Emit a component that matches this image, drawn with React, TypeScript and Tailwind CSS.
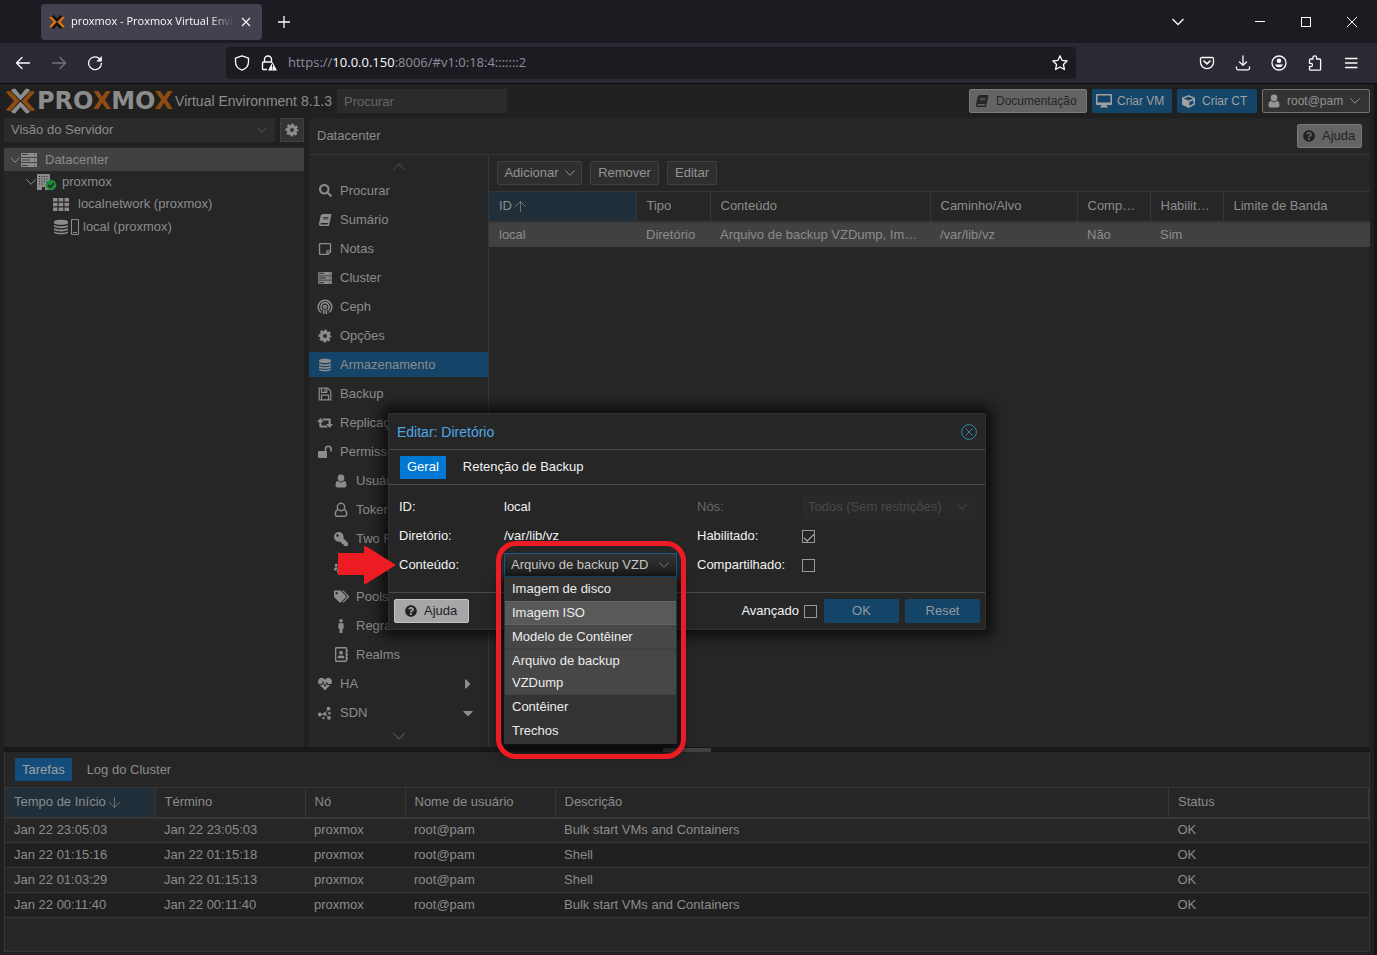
import { useState } from 'react';
import type { ReactNode } from 'react';
import { ArrowDown, ArrowUp } from 'lucide-react';
import {
    FaBook,
    FaCaretDown,
    FaCaretRight,
    FaCube,
    FaHeartbeat,
    FaKey,
    FaMale,
    FaQuestionCircle,
    FaRegAddressBook,
    FaRegStickyNote,
    FaSearch,
    FaTags,
    FaUsers
} from 'react-icons/fa';

type IconProps = { className?: string };

const Chevron = ({ className = '' }: IconProps) => (
    <svg viewBox="0 0 10 6" className={`shrink-0 ${className}`} fill="none" stroke="currentColor" strokeWidth="1" aria-hidden="true">
        <path d="M.5 .5L5 5.300 9.500 .5" />
    </svg>
);

const ServerIcon = ({ className = '' }: IconProps) => (
    <svg viewBox="0 0 16 14" className={className} fill="currentColor" aria-hidden="true">
        <path fillRule="evenodd" d="M0 0h16v4H0zM1 1h6v1H1zM13 1h1v1h-1zM0 5h16v4H0zM1 6.500h8v1H1zM13 6.500h1v1h-1zM0 10h16v4H0zM1 12h6v1H1zM13 12h1v1h-1z" />
    </svg>
);

const CogIcon = () => (
    <svg viewBox="0 0 14 14" className="size-3.5" fill="none" stroke="currentColor" aria-hidden="true">
        <circle cx="7" cy="7" r="3.600" strokeWidth="3.200" />
        <circle cx="7" cy="7" r="5.600" strokeWidth="1.800" strokeDasharray="2.600 1.798" strokeDashoffset="1.300" />
    </svg>
);

const DatabaseIcon = ({ className = '' }: IconProps) => (
    <svg viewBox="0 0 15 16" className={className} fill="currentColor" aria-hidden="true">
        <path d="M0 2.500c0-3 15-3 15 0v1.200c0 2.600-15 2.600-15 0zM0 5.800c3 1.900 12 1.900 15 0v1.500c0 2.600-15 2.600-15 0zM0 9.300c3 1.900 12 1.900 15 0v1.500c0 2.600-15 2.600-15 0zM0 12.700c3 1.900 12 1.900 15 0v.8c0 3-15 3-15 0z" />
    </svg>
);

const UserIcon = ({ className = '' }: IconProps) => (
    <svg viewBox="0 0 12 14" className={className} fill="currentColor" aria-hidden="true">
        <path d="M6 .5a3.300 3.300 0 0 1 3.300 3.500C9.300 6 7.900 7.600 6 7.600S2.700 6 2.700 4A3.300 3.300 0 0 1 6 .5zM3.200 6.700C4 7.700 4.900 8.300 6 8.300s2-.6 2.800-1.600c2.100.3 2.700 2.300 2.700 4.500 0 1.300-.8 2.300-2 2.300h-7c-1.200 0-2-1-2-2.300 0-2.200.6-4.200 2.700-4.500z" />
    </svg>
);

const UserOutlineIcon = () => (
    <svg viewBox="0 0 14 16" className="h-4 w-3.5" fill="none" stroke="currentColor" strokeWidth="1.400" aria-hidden="true">
        <circle cx="7" cy="5" r="3.700" />
        <path d="M3.900 7.300C2 8 1.300 10 1.300 12c0 1.300.8 2.200 2 2.200h7.400c1.200 0 2-.9 2-2.200 0-2-.7-4-2.600-4.700" />
    </svg>
);

const FloppyIcon = () => (
    <svg viewBox="0 0 14 14" className="size-3.5" fill="none" stroke="currentColor" strokeWidth="1.200" aria-hidden="true">
        <path d="M1.200 1.200h8.600l3 3v8.600H1.200zM3.500 12.500V8.200h7v4.300M3.500 1.500v3.800h5.300V1.500M7 2v2.500" />
    </svg>
);

const RetweetIcon = () => (
    <svg viewBox="0 0 16 12" className="h-3 w-4" fill="currentColor" aria-hidden="true">
        <path d="M3.400 1L6.800 5H4.500v3.500h5L11 10.500H3.300q-1 0-1-1V5H0zM12.600 11L9.200 7h2.300V3.500h-5L5 1.500h7.700q1 0 1 1V7H16z" />
    </svg>
);

const CephIcon = () => (
    <svg viewBox="0 0 16 16" className="size-4" fill="none" stroke="currentColor" strokeWidth="1.500" aria-hidden="true">
        <path d="M4 13.500A6.800 6.800 0 1 1 12 13.500" />
        <path d="M5.300 11A4.100 4.100 0 1 1 10.700 11" />
        <circle cx="8" cy="7.800" r="1.400" />
        <path d="M6.700 10.500v4.500M9.300 10.500v4.500" />
    </svg>
);

const UnlockIcon = () => (
    <svg viewBox="0 0 16 14" className="h-3.5 w-4" fill="currentColor" aria-hidden="true">
        <rect x="1" y="6" width="9" height="7" rx="1" />
        <path d="M8.500 6V4a2.800 2.800 0 0 1 5.600 0v2.500" fill="none" stroke="currentColor" strokeWidth="1.600" />
    </svg>
);

const SdnIcon = () => (
    <svg viewBox="0 0 16 16" className="size-4" fill="currentColor" aria-hidden="true">
        <path d="M2.500 9.500L8 9l3-5M8 9l4 3.500" stroke="currentColor" strokeWidth="0.800" fill="none" />
        <circle cx="2.800" cy="9.500" r="1.900" />
        <circle cx="7.700" cy="9" r="1.700" />
        <circle cx="11.500" cy="3.700" r="1.900" />
        <circle cx="12.500" cy="8.300" r="1.300" />
        <circle cx="12" cy="12.800" r="1.900" />
        <circle cx="6.500" cy="13" r="1.200" />
    </svg>
);

const DesktopIcon = () => (
    <svg viewBox="0 0 16 14" className="h-3.5 w-4" aria-hidden="true">
        <path fillRule="evenodd" fill="currentColor" d="M1 0h14a1 1 0 0 1 1 1v9a1 1 0 0 1-1 1h-4.500l.5 1.500h1V13.500H4V12.500h1L5.500 11H1a1 1 0 0 1-1-1V1a1 1 0 0 1 1-1zM1.500 1.500v7h13v-7z" />
    </svg>
);

const GridIcon = () => (
    <svg viewBox="0 0 16 13" className="h-[13px] w-4" fill="currentColor" aria-hidden="true">
        <path d="M0 0h4.500v3.500H0zM5.700 0h4.600v3.500H5.700zM11.500 0H16v3.500h-4.500zM0 4.700h4.500v3.600H0zM5.700 4.700h4.600v3.600H5.700zM11.500 4.700H16v3.600h-4.500zM0 9.500h4.500V13H0zM5.700 9.500h4.600V13H5.700zM11.500 9.500H16V13h-4.500z" />
    </svg>
);

const NodeIcon = () => (
    <svg viewBox="0 0 20 17" className="h-[17px] w-5" aria-hidden="true">
        <path d="M0 0h13v16H0z" fill="#8a8a8a" />
        <path d="M2 2h1v1H2zM4.500 2h1v1h-1zM7 2h1v1H7zM9.500 2h1v1h-1zM2 4.500h1v1H2zM4.500 4.500h1v1h-1zM7 4.500h1v1H7zM9.500 4.500h1v1h-1zM2 7h1v1H2zM4.500 7h1v1h-1zM7 7h1v1H7zM2 9.500h1v1H2zM4.500 9.500h1v1h-1zM5 13h3v3H5z" fill="#262626" />
        <circle cx="14" cy="11" r="5.300" fill="#1f8a3b" />
        <path d="M11.300 11.200l2 2 3.500-4" fill="none" stroke="#1d2b20" strokeWidth="1.700" />
    </svg>
);

const ProxmoxMark = ({ className = '', chevron, wing }: IconProps & { chevron: string; wing: string }) => (
    <svg viewBox="0 0 29 26" className={className} aria-hidden="true">
        <path d="M5 2.500Q6 .5 9 .5l5.500 6.500L20 .5q3 0 4 2L14.500 12.500zM5 23.500q1 2 4 2l5.500-6.500L20 25.500q3 0 4-2L14.500 13.500z" fill={chevron} />
        <path d="M0 4q2-1.500 5-.5L13.500 13 5 22.500q-3 1-5-.5L8 13zM29 4q-2-1.500-5-.5L15.500 13l8.500 9.500q3 1 5-.5L21 13z" fill={wing} />
    </svg>
);

const BrowserIcon = ({ children }: { children: ReactNode }) => (
    <svg
        viewBox="0 0 16 16"
        className="size-4"
        fill="none"
        stroke="currentColor"
        strokeWidth="1.300"
        strokeLinecap="round"
        strokeLinejoin="round"
        aria-hidden="true"
    >
        {children}
    </svg>
);

const browserActions = [
    {
        label: 'Salvar no Pocket',
        icon: <><path d="M2.800 2.500h10.400a1.300 1.300 0 0 1 1.300 1.300v3.400a6.500 6.500 0 0 1-13 0V3.800a1.300 1.300 0 0 1 1.300-1.300z" /><path d="M5 6l3 2.800L11 6" strokeWidth="1.600" /></>
    },
    { label: 'Downloads', icon: <path d="M8 .8v9.400M4.500 7L8 10.400 11.500 7M1.500 12v1.300a1.500 1.500 0 0 0 1.500 1.500h10a1.500 1.500 0 0 0 1.500-1.500V12" /> },
    {
        label: 'Conta',
        icon: <><circle cx="8" cy="8" r="7" /><circle cx="8" cy="5.800" r="2.300" fill="currentColor" stroke="none" /><path d="M3.800 9.500h8.400a4.600 4.600 0 0 1-8.400 0z" fill="currentColor" stroke="none" /></>
    },
    {
        label: 'Extensões',
        icon: <path d="M6 4V2.600a1.800 1.800 0 0 1 3.600 0V4h3a1 1 0 0 1 1 1v9.200a1 1 0 0 1-1 1H3.500a1 1 0 0 1-1-1v-2.700h1.400a1.600 1.600 0 0 0 0-3.200H2.500V5a1 1 0 0 1 1-1z" />
    },
    { label: 'Menu', icon: <path d="M2.500 3.500h11.500M2.500 8h11.500M2.500 12.500h11.500" /> }
];

type MenuItem = { label: string; icon: ReactNode; child?: boolean; arrow?: 'right' | 'down' };

const menuItems: MenuItem[] = [
    { label: 'Procurar', icon: <FaSearch size={13} /> },
    { label: 'Sumário', icon: <FaBook className="h-3 w-3.5 -skew-x-12" /> },
    { label: 'Notas', icon: <FaRegStickyNote size={14} /> },
    { label: 'Cluster', icon: <ServerIcon className="h-3 w-3.5" /> },
    { label: 'Ceph', icon: <CephIcon /> },
    { label: 'Opções', icon: <CogIcon /> },
    { label: 'Armazenamento', icon: <DatabaseIcon className="h-3.5 w-3" /> },
    { label: 'Backup', icon: <FloppyIcon /> },
    { label: 'Replicação', icon: <RetweetIcon /> },
    { label: 'Permissões', icon: <UnlockIcon /> },
    { label: 'Usuários', icon: <UserIcon className="h-3.5 w-3" />, child: true },
    { label: 'Tokens da API', icon: <UserOutlineIcon />, child: true },
    { label: 'Two Factor', icon: <FaKey className="size-3.5 -scale-x-100" />, child: true },
    { label: 'Grupos', icon: <FaUsers size={15} />, child: true },
    { label: 'Pools', icon: <FaTags size={15} />, child: true },
    { label: 'Regras', icon: <FaMale size={14} />, child: true },
    { label: 'Realms', icon: <FaRegAddressBook size={15} />, child: true },
    { label: 'HA', icon: <FaHeartbeat size={14} />, arrow: 'right' },
    { label: 'SDN', icon: <SdnIcon />, arrow: 'down' }
];

const tasks = [
    ['Jan 22 23:05:03', 'Jan 22 23:05:03', 'proxmox', 'root@pam', 'Bulk start VMs and Containers', 'OK'],
    ['Jan 22 01:15:16', 'Jan 22 01:15:18', 'proxmox', 'root@pam', 'Shell', 'OK'],
    ['Jan 22 01:03:29', 'Jan 22 01:15:13', 'proxmox', 'root@pam', 'Shell', 'OK'],
    ['Jan 22 00:11:40', 'Jan 22 00:11:40', 'proxmox', 'root@pam', 'Bulk start VMs and Containers', 'OK']
];

const contentOptions = [
    { label: 'Imagem de disco' },
    { label: 'Imagem ISO', selected: true },
    { label: 'Modelo de Contêiner', selected: true },
    { label: 'Arquivo de backup VZDump', selected: true },
    { label: 'Contêiner' },
    { label: 'Trechos' }
];

function BrowserChrome() {
    return (
        <div className="text-[#fbfbfe] font-['Open_Sans','Noto_Sans',sans-serif]">
            <div className="flex h-[43px] items-center bg-[#1c1b22] pl-[41px] pr-[2px]">
                <div className="flex h-9 w-[221px] items-center rounded bg-[#42414d] pl-2 pr-1">
                    <ProxmoxMark className="h-3.5 w-4 shrink-0" chevron="#0c0c0c" wing="#e57000" />
                    <span className="ml-1.5 flex-1 overflow-hidden whitespace-nowrap text-[11px] [mask-image:linear-gradient(to_right,black_85%,transparent)]">
                        proxmox - Proxmox Virtual Environment
                    </span>
                    <button type="button" aria-label="Fechar aba" className="flex size-6 items-center justify-center">
                        <svg viewBox="0 0 10 10" className="size-2.5" stroke="currentColor" strokeWidth="1.100" aria-hidden="true">
                            <path d="M1 1l8 8M9 1L1 9" />
                        </svg>
                    </button>
                </div>
                <button type="button" aria-label="Nova aba" className="ml-2 flex size-7 items-center justify-center">
                    <svg viewBox="0 0 12 12" className="size-3" stroke="currentColor" strokeWidth="1.300" aria-hidden="true">
                        <path d="M6 0v12M0 6h12" />
                    </svg>
                </button>
                <button type="button" aria-label="Listar abas" className="ml-auto mr-9 flex h-9 w-[46px] items-center justify-center">
                    <svg viewBox="0 0 12 12" className="size-3" fill="none" stroke="currentColor" strokeWidth="1.300" aria-hidden="true">
                        <path d="M.5 3L6 8.500 11.500 3" />
                    </svg>
                </button>
                <button type="button" aria-label="Minimizar" className="flex h-9 w-[46px] items-center justify-center">
                    <span className="h-px w-2.5 bg-white" />
                </button>
                <button type="button" aria-label="Maximizar" className="flex h-9 w-[46px] items-center justify-center">
                    <span className="size-2.5 border border-white" />
                </button>
                <button type="button" aria-label="Fechar" className="flex h-9 w-[46px] items-center justify-center">
                    <svg viewBox="0 0 10 10" className="size-2.5" stroke="currentColor" strokeWidth="1" aria-hidden="true">
                        <path d="M0 0l10 10M10 0L0 10" />
                    </svg>
                </button>
            </div>

            <div className="flex h-[41px] items-center border-b border-[#0c0c0d] bg-[#2b2a33] pl-[5px] pr-2">
                <button type="button" aria-label="Voltar" className="flex size-9 items-center justify-center">
                    <BrowserIcon><path d="M1.500 8h13M7 2.500L1.500 8 7 13.500" /></BrowserIcon>
                </button>
                <button type="button" aria-label="Avançar" className="flex size-9 items-center justify-center text-[#77767e]">
                    <BrowserIcon><path d="M14.500 8h-13M9 2.500L14.500 8 9 13.500" /></BrowserIcon>
                </button>
                <button type="button" aria-label="Recarregar" className="flex size-9 items-center justify-center">
                    <BrowserIcon><path d="M12.800 4A6.400 6.400 0 1 0 14.400 8.500" /><path d="M14.800 1v5.500H9.300z" fill="currentColor" stroke="none" /></BrowserIcon>
                </button>
                <div className="mx-[113px] flex h-8 flex-1 items-center rounded bg-[#1c1b22] pl-2 pr-2">
                    <BrowserIcon><path d="M8 .8l6.500 2.400v3.500c0 4-2.500 7-6.500 8.500-4-1.500-6.500-4.500-6.500-8.500V3.200z" /></BrowserIcon>
                    <svg viewBox="0 0 16 16" className="ml-[11px] size-4" fill="none" stroke="currentColor" strokeWidth="1.400" aria-hidden="true">
                        <path d="M3.500 7V4.500a3.500 3.500 0 0 1 7 0V7M6 14.500H2.500a1 1 0 0 1-1-1V8a1 1 0 0 1 1-1h8.500" />
                        <path d="M11.500 7l4.500 8.500H7z" fill="currentColor" stroke="none" />
                        <path d="M11.500 9.500v3M11.500 13.500v1" stroke="#1c1b22" strokeWidth="1.100" />
                    </svg>
                    <a href="#v1:0:18:4:::::::2" className="ml-[11px] flex-1 text-[13px] text-[#8f8f9a]">
                        https://<span className="text-[#fbfbfe]">10.0.0.150</span>:8006/#v1:0:18:4:::::::2
                    </a>
                    <button type="button" aria-label="Adicionar aos favoritos">
                        <BrowserIcon><path d="M8 .8l2.100 4.600 5 .6-3.700 3.500 1 5L8 12l-4.400 2.500 1-5L.9 6l5-.6z" /></BrowserIcon>
                    </button>
                </div>
                {browserActions.map(({ label, icon }) => (
                    <button key={label} type="button" aria-label={label} className="flex size-9 items-center justify-center">
                        <BrowserIcon>{icon}</BrowserIcon>
                    </button>
                ))}
            </div>
        </div>
    );
}

function TopBar() {
    return (
        <header className="flex h-[34px] items-center gap-[5px] pl-0.5 text-xs">
            <div className="flex items-center text-[#8c8c8c]">
                <ProxmoxMark className="h-[26px] w-[29px]" chevron="#8c8c8c" wing="#8f4c10" />
                <span className="ml-0.5 font-['DejaVu_Sans',sans-serif] text-2xl leading-6 font-bold">
                    PRO<span className="text-[#8f4c10]">X</span>MO<span className="text-[#8f4c10]">X</span>
                </span>
                <span className="ml-0.5 whitespace-nowrap text-sm">Virtual Environment 8.1.3</span>
            </div>
            <input
                type="search"
                aria-label="Procurar"
                placeholder="Procurar"
                className="h-6 w-[170px] bg-[#2b2b2b] px-[7px] text-[13px] outline-none placeholder:text-[#666]"
            />
            <button type="button" className="ml-auto flex h-6 w-[118px] items-center gap-2 rounded-xs border border-[#7a7a7a] bg-[#646464] pl-1.5 text-[#262626]">
                <FaBook className="h-3 w-3 -skew-x-12" />
                Documentação
            </button>
            <button type="button" className="flex h-6 w-20 items-center gap-[5px] rounded-xs bg-[#144468] pl-1 text-[#a0a0a0]">
                <DesktopIcon />
                Criar VM
            </button>
            <button type="button" className="flex h-6 w-20 items-center gap-[7px] rounded-xs bg-[#144468] pl-[5px] text-[#a0a0a0]">
                <FaCube size={13} />
                Criar CT
            </button>
            <button type="button" className="flex h-6 w-[108px] items-center gap-[7px] rounded-xs border border-[#727272] bg-[#333] pl-[5px] text-[#949494]">
                <UserIcon className="h-3.5 w-3" />
                root@pam
                <Chevron className="h-1.5 w-2.5" />
            </button>
        </header>
    );
}

function ResourceTree() {
    return (
        <aside className="flex w-[300px] flex-col bg-[#262626]">
            <div className="flex gap-[5px] bg-[#202020] pb-[5px]">
                <div className="grid flex-1 items-center">
                    <select
                        aria-label="Visualização"
                        className="col-start-1 row-start-1 h-6 appearance-none bg-[#2b2b2b] pl-[7px] outline-none"
                    >
                        <option>Visão do Servidor</option>
                    </select>
                    <Chevron className="pointer-events-none col-start-1 row-start-1 mr-2 h-1.5 w-2.5 justify-self-end text-[#555]" />
                </div>
                <button type="button" aria-label="Configurações" className="flex size-6 items-center justify-center border border-[#404040] bg-[#333]">
                    <CogIcon />
                </button>
            </div>
            <ul role="tree" className="pt-px text-[#8c8c8c]">
                <li role="treeitem" aria-selected="true" className="flex h-[23px] items-center bg-[#414141] pl-1.5">
                    <Chevron className="h-1.5 w-2.5" />
                    <ServerIcon className="ml-px h-3.5 w-4" />
                    <span className="ml-2">Datacenter</span>
                </li>
                <li role="treeitem" className="flex h-[22px] items-center pl-[22px]">
                    <Chevron className="h-1.5 w-2.5" />
                    <span className="ml-px"><NodeIcon /></span>
                    <span className="ml-[5px]">proxmox</span>
                </li>
                <li role="treeitem" className="flex h-[22px] items-center pl-[49px]">
                    <GridIcon />
                    <span className="ml-[9px]">localnetwork (proxmox)</span>
                </li>
                <li role="treeitem" className="flex h-[23px] items-center pl-[50px]">
                    <DatabaseIcon className="h-4 w-3.5" />
                    <svg viewBox="0 0 8 16" className="ml-[3px] h-4 w-2" aria-hidden="true">
                        <path d="M.5.5h7v15h-7zM2 13.500h4" fill="none" stroke="#8c8c8c" />
                    </svg>
                    <span className="ml-1">local (proxmox)</span>
                </li>
            </ul>
        </aside>
    );
}

function SideMenu() {
    return (
        <nav className="flex w-[180px] flex-col border-r border-[#363636] text-[#8c8c8c]">
            <div className="flex h-[23px] items-center justify-center text-[#414141]">
                <Chevron className="h-2 w-3.5 rotate-180" />
            </div>
            <ul className="space-y-1">
                {menuItems.map(({ label, icon, child, arrow }) => (
                    <li key={label}>
                        <button
                            type="button"
                            className={`flex h-[25px] w-full items-center ${child ? 'pl-6' : 'pl-2'} ${label === 'Armazenamento' ? 'bg-[#144468]' : ''}`}
                        >
                            <span className="flex w-4 justify-center">{icon}</span>
                            <span className="ml-[7px]">{label}</span>
                            {arrow === 'right' && <FaCaretRight size={16} className="ml-auto mr-3" />}
                            {arrow === 'down' && <FaCaretDown size={16} className="ml-auto mr-3" />}
                        </button>
                    </li>
                ))}
            </ul>
            <div className="flex h-[22px] items-center justify-center text-[#505050]">
                <Chevron className="h-2 w-3.5" />
            </div>
        </nav>
    );
}

function StoragePanel() {
    const th = 'h-[30px] truncate border-r border-[#363636] px-[10px] text-left font-normal last:border-r-0';
    const td = 'h-[25px] truncate px-[10px]';
    const toolButton = 'flex h-6 items-center justify-center gap-1.5 rounded-xs border border-[#404040] bg-[#2f2f2f] text-[#949494]';

    return (
        <section className="min-w-0 flex-1 text-[#8c8c8c]">
            <div className="flex h-9 items-center gap-2 px-2">
                <button type="button" className={`${toolButton} w-[85px]`}>
                    Adicionar
                    <Chevron className="h-1.5 w-2.5" />
                </button>
                <button type="button" className={`${toolButton} w-[69px]`}>Remover</button>
                <button type="button" className={`${toolButton} w-[50px]`}>Editar</button>
            </div>
            <table className="w-full table-fixed border-collapse border-t border-[#363636]">
                <colgroup>
                    <col className="w-[147px]" />
                    <col className="w-[74px]" />
                    <col className="w-[220px]" />
                    <col className="w-[147px]" />
                    <col className="w-[73px]" />
                    <col className="w-[73px]" />
                    <col />
                </colgroup>
                <thead>
                    <tr className="border-b-2 border-[#363636]">
                        <th className={`${th} bg-[#202f3a]`}>
                            ID<ArrowUp size={17} strokeWidth={1} className="inline" />
                        </th>
                        <th className={th}>Tipo</th>
                        <th className={th}>Conteúdo</th>
                        <th className={th}>Caminho/Alvo</th>
                        <th className={th}>Compartilhado</th>
                        <th className={th}>Habilitado</th>
                        <th className={th}>Limite de Banda</th>
                    </tr>
                </thead>
                <tbody>
                    <tr className="bg-[#414141]">
                        <td className={td}>local</td>
                        <td className={td}>Diretório</td>
                        <td className={td}>Arquivo de backup VZDump, Imagem ISO, Modelo de Contêiner</td>
                        <td className={td}>/var/lib/vz</td>
                        <td className={td}>Não</td>
                        <td className={td}>Sim</td>
                        <td className={td}></td>
                    </tr>
                </tbody>
            </table>
        </section>
    );
}

function TaskLog() {
    const headers = ['Tempo de Início', 'Término', 'Nó', 'Nome de usuário', 'Descrição', 'Status'];

    return (
        <section className="mb-[3px] h-[200px] border-x border-b border-[#363636] bg-[#262626] text-[#8c8c8c]">
            <div className="flex h-[35px] items-center gap-2 pl-[10px]">
                <button type="button" className="h-[23px] bg-[#144d7c] px-[7px] text-[#a0a0a0]">Tarefas</button>
                <button type="button" className="h-[23px] px-[7px]">Log do Cluster</button>
            </div>
            <table className="w-full table-fixed border-collapse border-t border-[#363636]">
                <colgroup>
                    <col className="w-[150px]" />
                    <col className="w-[150px]" />
                    <col className="w-[100px]" />
                    <col className="w-[150px]" />
                    <col />
                    <col className="w-[200px]" />
                </colgroup>
                <thead>
                    <tr className="border-b-2 border-[#363636]">
                        {headers.map((header, i) => (
                            <th
                                key={header}
                                className={`h-[30px] border-r border-[#363636] px-[9px] text-left font-normal whitespace-nowrap ${i === 0 ? 'bg-[#202f3a]' : ''}`}
                            >
                                {header}
                                {i === 0 && <ArrowDown size={17} strokeWidth={1} className="inline" />}
                            </th>
                        ))}
                    </tr>
                </thead>
                <tbody>
                    {tasks.map((task) => (
                        <tr key={task[0]} className="border-b border-[#363636] even:bg-[#202020]">
                            {task.map((cell, i) => (
                                <td key={i} className="h-[25px] px-[9px]">{cell}</td>
                            ))}
                        </tr>
                    ))}
                </tbody>
            </table>
        </section>
    );
}

function EditDialog() {
    const [enabled, setEnabled] = useState(true);
    const [shared, setShared] = useState(false);
    const [advanced, setAdvanced] = useState(false);
    const checkbox =
        "grid size-[13px] appearance-none place-items-center border border-[#999] checked:after:h-[5px] checked:after:w-[10px] checked:after:-rotate-45 checked:after:border-b checked:after:border-l checked:after:border-[#bbb] checked:after:content-['']";

    return (
        <div
            role="dialog"
            aria-labelledby="dialog-title"
            className="w-[598px] rounded-xs border border-[#303030] bg-[#262626] text-[#f2f2f2] shadow-[0_0_14px_6px_rgba(0,0,0,0.7)]"
        >
            <div className="flex h-[35px] items-center justify-between px-2">
                <h2 id="dialog-title" className="text-sm text-[#4fa8e8]">Editar: Diretório</h2>
                <button type="button" aria-label="Fechar janela" className="text-[#2a86ab]">
                    <svg viewBox="0 0 16 16" className="size-4" fill="none" stroke="currentColor" aria-hidden="true">
                        <circle cx="8" cy="8" r="7.400" />
                        <path d="M4.500 4.500l7 7M11.500 4.500l-7 7" />
                    </svg>
                </button>
            </div>
            <div className="flex h-9 items-center gap-[10px] border-y border-[#4a4a4a] px-[11px]">
                <button type="button" className="h-[23px] bg-[#0078d4] px-[7px] text-white">Geral</button>
                <button type="button" className="h-[23px] px-[7px]">Retenção de Backup</button>
            </div>
            <form className="grid grid-cols-2 gap-x-5 border-b border-[#4a4a4a] px-[10px] pt-[10px] pb-[15px]">
                <div className="space-y-[5px]">
                    <div className="flex h-6 items-center">
                        <label htmlFor="storage-id" className="w-[105px]">ID:</label>
                        <output id="storage-id">local</output>
                    </div>
                    <div className="flex h-6 items-center">
                        <label htmlFor="storage-path" className="w-[105px]">Diretório:</label>
                        <output id="storage-path">/var/lib/vz</output>
                    </div>
                    <div className="relative flex h-6 items-center">
                        <label htmlFor="storage-content" className="w-[105px]">Conteúdo:</label>
                        <div className="relative w-[173px]">
                            <select
                                id="storage-content"
                                className="h-6 w-full appearance-none border border-[#14598c] bg-linear-to-b from-[#333] to-[#1e1e1e] pr-7 pl-1.5 text-[#c8c8c8] outline-none"
                            >
                                <option>Arquivo de backup VZDump, Imagem ISO, Modelo de Contêiner</option>
                            </select>
                            <Chevron className="pointer-events-none absolute top-[9px] right-2 h-1.5 w-2.5 text-[#777]" />
                            <ul
                                role="listbox"
                                aria-multiselectable="true"
                                aria-label="Conteúdo"
                                className="absolute top-6 left-0 z-10 w-full bg-[#333] pb-px leading-[22px] text-[#ececec] shadow-[0_4px_10px_4px_rgba(0,0,0,0.7)]"
                            >
                                {contentOptions.map(({ label, selected }) => (
                                    <li
                                        key={label}
                                        role="option"
                                        aria-selected={!!selected}
                                        className={`mx-px border-y border-dotted pr-6 pl-[7px] ${
                                            label === 'Imagem ISO'
                                                ? 'border-[#707070] bg-[#595959]'
                                                : selected
                                                    ? 'border-[#3a3a3a] bg-[#474747]'
                                                    : 'border-transparent'
                                        }`}
                                    >
                                        {label}
                                    </li>
                                ))}
                            </ul>
                            {/* red marker around the open list */}
                            <div className="pointer-events-none absolute -top-3 -left-2 z-20 h-[218px] w-[190px] rounded-[20px] border-[5px] border-[#ed1c24]" />
                        </div>
                        <svg viewBox="0 0 58 38" className="absolute -top-[7px] -left-[61px] h-[38px] w-[58px]" aria-hidden="true">
                            <path d="M0 7h26V0q2 0 4 1.500L58 19 30 36.500Q28 38 26 38v-9H0z" fill="#ed1c24" />
                        </svg>
                    </div>
                </div>
                <div className="space-y-[5px]">
                    <div className="flex h-6 items-center">
                        <label htmlFor="storage-nodes" className="w-[105px] text-[#686868]">Nós:</label>
                        <div className="grid w-[173px] items-center text-[#4a4a4a]">
                            <select
                                id="storage-nodes"
                                disabled
                                className="col-start-1 row-start-1 h-6 appearance-none bg-[#292929] pl-1.5"
                            >
                                <option>Todos (Sem restrições)</option>
                            </select>
                            <Chevron className="pointer-events-none col-start-1 row-start-1 mr-2 h-1.5 w-2.5 justify-self-end" />
                        </div>
                    </div>
                    <div className="flex h-6 items-center">
                        <label htmlFor="storage-enabled" className="w-[105px]">Habilitado:</label>
                        <input id="storage-enabled" type="checkbox" className={checkbox} checked={enabled} onChange={(e) => setEnabled(e.target.checked)} />
                    </div>
                    <div className="flex h-6 items-center">
                        <label htmlFor="storage-shared" className="w-[105px]">Compartilhado:</label>
                        <input id="storage-shared" type="checkbox" className={checkbox} checked={shared} onChange={(e) => setShared(e.target.checked)} />
                    </div>
                </div>
            </form>
            <div className="flex h-9 items-center px-[5px]">
                <button type="button" className="flex h-6 w-[75px] items-center gap-[7px] rounded-xs border border-[#c4c4c4] bg-[#a6a6a6] pl-[10px] text-[#222]">
                    <FaQuestionCircle size={12} />
                    Ajuda
                </button>
                <label className="ml-auto flex items-center gap-[5px]">
                    Avançado
                    <input type="checkbox" className={checkbox} checked={advanced} onChange={(e) => setAdvanced(e.target.checked)} />
                </label>
                <button type="button" className="ml-[7px] h-6 w-[75px] rounded-xs bg-[#144468] text-[#8f9ba3]">OK</button>
                <button type="button" className="ml-1.5 h-6 w-[75px] rounded-xs bg-[#144468] text-[#8f9ba3]">Reset</button>
            </div>
        </div>
    );
}

export default function App() {
    return (
        <div className="flex min-h-screen flex-col overflow-hidden bg-[#202020]">
            <BrowserChrome />
            <div className="relative flex flex-1 flex-col border-r-[3px] border-[#16161a] bg-[#202020] pr-1 pl-1 font-['Liberation_Sans',Arial,sans-serif] text-[13px] leading-4 text-[#8c8c8c]">
                <TopBar />
                <main className="flex flex-1 gap-[5px]">
                    <ResourceTree />
                    <div className="flex min-w-0 flex-1 flex-col bg-[#262626]">
                        <div className="flex h-[37px] items-center justify-between border-b border-[#363636] pr-2 pl-2">
                            <h1>Datacenter</h1>
                            <button type="button" className="flex h-6 w-[65px] items-center gap-[7px] rounded-xs border border-[#7a7a7a] bg-[#646464] pl-[5px] text-[#222]">
                                <FaQuestionCircle size={12} />
                                Ajuda
                            </button>
                        </div>
                        <div className="flex flex-1">
                            <SideMenu />
                            <StoragePanel />
                        </div>
                    </div>
                </main>
                <div className="flex h-[5px] items-end justify-center bg-[#181818]">
                    <div className="h-1 w-12 bg-[#414141]" />
                </div>
                <TaskLog />
                <div className="absolute inset-0 flex items-center justify-center pt-1">
                    <EditDialog />
                </div>
            </div>
        </div>
    );
}
